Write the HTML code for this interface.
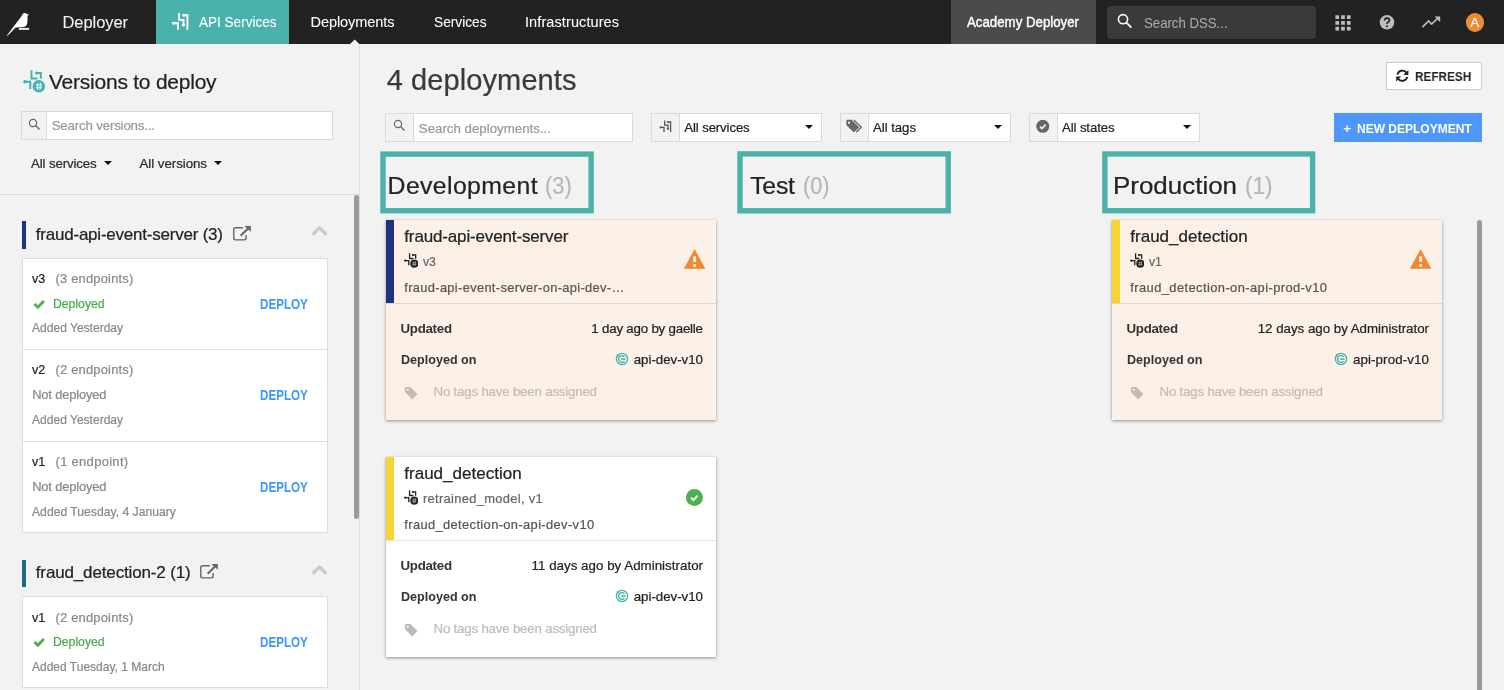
<!DOCTYPE html>
<html>
<head>
<meta charset="utf-8">
<title>Deployer</title>
<style>
*{box-sizing:border-box;margin:0;padding:0}
html,body{width:1504px;height:690px;overflow:hidden;background:#f2f2f2;font-family:"Liberation Sans",sans-serif;color:#222}
#wrap{position:absolute;left:0;top:0;width:1504px;height:690px;will-change:transform}
.a{position:absolute}
.t{position:absolute;white-space:nowrap;line-height:1;-webkit-text-stroke:0.22px}
#nav{position:absolute;left:0;top:0;width:1504px;height:44px;background:#222}
#tabapi{position:absolute;left:156px;top:0;width:133px;height:44px;background:#4ab2ab}
#inst{position:absolute;left:951px;top:0;width:145px;height:44px;background:#4b4b4b}
#gsearch{position:absolute;left:1107px;top:6px;width:209px;height:33px;background:#3a3a3a;border-radius:4px}
.inp{position:absolute;background:#fff;border:1px solid #dadada}
.inp .ic{position:absolute;left:0;top:0;bottom:0;background:#f2f2f2;border-right:1px solid #dadada}
.vbox{position:absolute;left:22px;width:306px;background:#fff;border:1px solid #dddddd}
.vsep{position:absolute;left:22px;width:306px;height:1px;background:#dddddd}
.card{position:absolute;width:330px;height:200px;box-shadow:0 1px 3px rgba(0,0,0,.42)}
.card .bar{position:absolute;left:0;top:0;width:8px;height:83px}
.card .dv{position:absolute;left:0;top:83px;width:330px;height:1px}
.hl{position:absolute;border:5px solid #4ab2ab}
.caret{position:absolute;width:0;height:0;border-left:4.5px solid transparent;border-right:4.5px solid transparent;border-top:4.7px solid #111}
</style>
</head>
<body>
<div id="wrap">

<div id="nav">
  <div id="tabapi"></div>
  <div id="inst"></div>
  <div id="gsearch"></div>

  <svg class="a" style="left:0;top:0" width="60" height="44" viewBox="0 0 60 44"><path d="M6.9 35.5 L21.8 15.8 Q22.3 12.9 24.9 12.9 Q26.6 12.9 27.4 14.4 L29.1 14 L27.5 16.2 Q27.7 20 27.3 23 Q26.3 27.3 22 27.3 L15.6 27.6 L7.6 35.7 Z" fill="#fff"/><rect x="18.9" y="27.9" width="10.2" height="2" fill="#e8e8e8"/></svg>
  <svg class="a" style="left:168px;top:10px" width="24" height="24" viewBox="168 10 24 24"><g fill="none" stroke="#fff" stroke-width="1.9"><path d="M173.4 23.2 H178 V29.8"/><path d="M179.1 13 V19.9 H183.5 V25"/><path d="M183.7 15.2 H187.4 V29.8"/></g><circle cx="173.5" cy="23.2" r="1.5" fill="#fff"/><circle cx="183.5" cy="25" r="1.6" fill="#fff"/><circle cx="183.7" cy="15.2" r="1.5" fill="#fff"/></svg>
  <svg class="a" style="left:349px;top:39px" width="12" height="5" viewBox="349 39 12 5"><path d="M350.1 44 L354.7 39.6 L359.3 44 Z" fill="#f2f2f2"/></svg>
  <svg class="a" style="left:1114px;top:10px" width="22" height="22" viewBox="1114 10 22 22"><circle cx="1123" cy="19.2" r="4.6" fill="none" stroke="#fff" stroke-width="1.6"/><path d="M1126.4 22.6 L1131.4 27.6" stroke="#fff" stroke-width="1.8"/></svg>
  <svg class="a" style="left:1335px;top:14.6px" width="16" height="16" viewBox="0 0 16 16"><g fill="#bdbdbd"><rect x="0.40" y="0.30" width="3.7" height="3.7"/><rect x="6.15" y="0.30" width="3.7" height="3.7"/><rect x="11.90" y="0.30" width="3.7" height="3.7"/><rect x="0.40" y="6.05" width="3.7" height="3.7"/><rect x="6.15" y="6.05" width="3.7" height="3.7"/><rect x="11.90" y="6.05" width="3.7" height="3.7"/><rect x="0.40" y="11.80" width="3.7" height="3.7"/><rect x="6.15" y="11.80" width="3.7" height="3.7"/><rect x="11.90" y="11.80" width="3.7" height="3.7"/></g></svg>
  <svg class="a" style="left:1379px;top:14px" width="16" height="16" viewBox="0 0 16 16"><circle cx="8" cy="8.3" r="7.3" fill="#bdbdbd"/><path d="M5.6 6.6 Q5.6 4.2 8 4.2 Q10.4 4.2 10.4 6.3 Q10.4 7.6 9 8.3 Q8 8.8 8 10" fill="none" stroke="#222" stroke-width="1.7"/><circle cx="8" cy="12.2" r="1.05" fill="#222"/></svg>
  <svg class="a" style="left:1420px;top:14px" width="22" height="16" viewBox="1420 14 22 16"><path d="M1422.4 27.2 L1428.6 21 L1431.6 24 L1438.6 17.4" fill="none" stroke="#bdbdbd" stroke-width="1.7"/><path d="M1434.6 16.6 H1440.2 V22.2 Z" fill="#bdbdbd"/></svg>
  <div class="a" style="left:1465.7px;top:13.2px;width:18.6px;height:18.6px;border-radius:50%;background:#ef8b33"></div>
  <div class="t" style="left:1470.2px;top:16px;font-size:13.5px;color:#fff">A</div>
  <div class="t" style="top:14px;font-size:16.5px;color:#f2f2f2;left:62.50px;letter-spacing:-0.076px;-webkit-text-stroke:0.08px;">Deployer</div>
  <div class="t" style="top:15px;font-size:14.5px;color:#fff;left:198.50px;transform:scaleX(0.9337);transform-origin:left center;-webkit-text-stroke:0.08px;">API Services</div>
  <div class="t" style="top:15px;font-size:14.5px;color:#fff;left:310.50px;letter-spacing:-0.062px;-webkit-text-stroke:0.08px;">Deployments</div>
  <div class="t" style="top:15px;font-size:14.5px;color:#fff;left:433.60px;transform:scaleX(0.9460);transform-origin:left center;-webkit-text-stroke:0.08px;">Services</div>
  <div class="t" style="top:15px;font-size:14.5px;color:#fff;left:525.00px;letter-spacing:0.095px;-webkit-text-stroke:0.08px;">Infrastructures</div>
  <div class="t" style="top:15px;font-size:14px;color:#fff;left:967.00px;transform:scaleX(0.9469);transform-origin:left center;-webkit-text-stroke:0.4px;">Academy Deployer</div>
  <div class="t" style="top:16px;font-size:14.5px;color:#a8a8a8;left:1144.00px;transform:scaleX(0.9100);transform-origin:left center;-webkit-text-stroke:0.08px;">Search DSS...</div>
</div>


<div class="a" style="left:359px;top:44px;width:1px;height:646px;background:#dedede"></div>
<svg class="a" style="left:22.5px;top:70px" width="22.0" height="23.0" viewBox="0 0 22 23"><g fill="none" stroke="#3fb3ac" stroke-width="2"><path d="M1.8 11.8 H7.3 V18.9"/><path d="M8.5 0.3 V8.4 H14.4"/><path d="M13.6 3 H17.8 V8.7"/></g><circle cx="1.9" cy="11.8" r="1.7" fill="#3fb3ac"/><circle cx="13.6" cy="3" r="1.6" fill="#3fb3ac"/><circle cx="15.8" cy="16.3" r="6.2" fill="#3fb3ac"/><path d="M15 12.7 L14.3 19.9 M17.6 12.7 L16.9 19.9 M12.8 15 H19.1 M12.6 17.7 H18.9" stroke="#fff" stroke-width="1.0" opacity="1.0"/></svg>
<div class="t" style="top:71px;font-size:21px;color:#222;left:49.00px;letter-spacing:-0.236px;">Versions to deploy</div>
<div class="inp" style="left:21px;top:111px;width:312px;height:29px"><div class="ic" style="width:25px"></div></div>
<svg class="a" style="left:25px;top:115.4px" width="18" height="18" viewBox="-8 -8 18 18"><circle cx="0" cy="0" r="3.6" fill="none" stroke="#666" stroke-width="1.2"/><path d="M2.59 2.59 L6.49 6.49" stroke="#666" stroke-width="1.4"/></svg>
<div class="t" style="top:119px;font-size:13.3px;color:#999;left:51.70px;letter-spacing:-0.184px;">Search versions...</div>
<div class="t" style="top:157px;font-size:13.3px;color:#2b2b2b;left:31.00px;letter-spacing:-0.140px;">All services</div>
<div class="caret" style="left:103.9px;top:160.9px"></div>
<div class="t" style="top:157px;font-size:13.3px;color:#2b2b2b;left:139.50px;letter-spacing:-0.044px;">All versions</div>
<div class="caret" style="left:214px;top:160.9px"></div>
<div class="a" style="left:0;top:194px;width:359px;height:1px;background:#dcdcdc"></div>
<div class="a" style="left:354px;top:195px;width:5px;height:324px;background:#9b9b9b;border-radius:2.5px"></div>

<div class="a" style="left:22px;top:221px;width:4px;height:28px;background:#1e3282"></div>
<div class="t" style="top:226px;font-size:17px;color:#222;left:35.80px;letter-spacing:-0.221px;">fraud-api-event-server (3)</div>
<svg class="a" style="left:232px;top:225px" width="20" height="17" viewBox="232 225 20 17"><path d="M242.9 227.8 H235.6 Q233.75 227.8 233.75 229.6 V238.1 Q233.75 239.9 235.6 239.9 H244.3 Q246.15 239.9 246.15 238.1 V235" fill="none" stroke="#666" stroke-width="1.4"/><path d="M240.7 235.7 L248 228.4" stroke="#666" stroke-width="2.1"/><path d="M244.4 226.1 H250.8 V231.8 Z" fill="#666"/></svg>
<svg class="a" style="left:311px;top:224.5px" width="17" height="11" viewBox="0 0 17 11"><path d="M2.7 8.5 L8.5 2.9 L14.3 8.5" fill="none" stroke="#cbcbcb" stroke-width="3.5" stroke-linecap="round" stroke-linejoin="round"/></svg>
<div class="vbox" style="top:258px;height:275px"></div>
<div class="vsep" style="top:349px"></div>
<div class="vsep" style="top:441px"></div>
<div class="t" style="top:273px;font-size:12.9px;color:#222;left:32.00px;transform:scaleX(0.9696);transform-origin:left center;">v3</div><div class="t" style="top:273px;font-size:12.9px;color:#888;left:55.50px;letter-spacing:0.213px;">(3 endpoints)</div><svg class="a" style="left:32.5px;top:297.8px" width="13" height="12" viewBox="0 0 13 12"><path d="M1.5 6 L4.9 9.2 L10.9 3" fill="none" stroke="#4caf50" stroke-width="2.8"/></svg><div class="t" style="top:298px;font-size:12.9px;color:#47ab4b;left:52.80px;transform:scaleX(0.9474);transform-origin:left center;">Deployed</div><div class="t" style="top:297px;font-size:14px;color:#3d98fb;left:260.00px;transform:scaleX(0.8304);transform-origin:left center;font-weight:bold;-webkit-text-stroke:0;">DEPLOY</div><div class="t" style="top:322px;font-size:12.9px;color:#888;left:31.90px;transform:scaleX(0.9344);transform-origin:left center;">Added Yesterday</div>
<div class="t" style="top:364px;font-size:12.9px;color:#222;left:32.00px;transform:scaleX(0.9696);transform-origin:left center;">v2</div><div class="t" style="top:364px;font-size:12.9px;color:#888;left:55.50px;letter-spacing:0.213px;">(2 endpoints)</div><div class="t" style="top:389px;font-size:12.9px;color:#888;left:32.20px;letter-spacing:-0.160px;">Not deployed</div><div class="t" style="top:388px;font-size:14px;color:#3d98fb;left:260.00px;transform:scaleX(0.8304);transform-origin:left center;font-weight:bold;-webkit-text-stroke:0;">DEPLOY</div><div class="t" style="top:414px;font-size:12.9px;color:#888;left:31.90px;transform:scaleX(0.9344);transform-origin:left center;">Added Yesterday</div>
<div class="t" style="top:456px;font-size:12.9px;color:#222;left:32.00px;transform:scaleX(0.9696);transform-origin:left center;">v1</div><div class="t" style="top:456px;font-size:12.9px;color:#888;left:55.50px;letter-spacing:0.346px;">(1 endpoint)</div><div class="t" style="top:481px;font-size:12.9px;color:#888;left:32.20px;letter-spacing:-0.160px;">Not deployed</div><div class="t" style="top:480px;font-size:14px;color:#3d98fb;left:260.00px;transform:scaleX(0.8304);transform-origin:left center;font-weight:bold;-webkit-text-stroke:0;">DEPLOY</div><div class="t" style="top:506px;font-size:12.9px;color:#888;left:31.90px;transform:scaleX(0.9441);transform-origin:left center;">Added Tuesday, 4 January</div>

<div class="a" style="left:22px;top:560px;width:4px;height:27px;background:#1f6a83"></div>
<div class="t" style="top:564px;font-size:17px;color:#222;left:35.80px;letter-spacing:-0.146px;">fraud_detection-2 (1)</div>
<svg class="a" style="left:198.8px;top:563.3px" width="20" height="17" viewBox="232 225 20 17"><path d="M242.9 227.8 H235.6 Q233.75 227.8 233.75 229.6 V238.1 Q233.75 239.9 235.6 239.9 H244.3 Q246.15 239.9 246.15 238.1 V235" fill="none" stroke="#666" stroke-width="1.4"/><path d="M240.7 235.7 L248 228.4" stroke="#666" stroke-width="2.1"/><path d="M244.4 226.1 H250.8 V231.8 Z" fill="#666"/></svg>
<svg class="a" style="left:311px;top:563.5px" width="17" height="11" viewBox="0 0 17 11"><path d="M2.7 8.5 L8.5 2.9 L14.3 8.5" fill="none" stroke="#cbcbcb" stroke-width="3.5" stroke-linecap="round" stroke-linejoin="round"/></svg>
<div class="vbox" style="top:596px;height:92px"></div>
<div class="t" style="top:612px;font-size:12.9px;color:#222;left:32.00px;transform:scaleX(0.9696);transform-origin:left center;">v1</div><div class="t" style="top:612px;font-size:12.9px;color:#888;left:55.50px;letter-spacing:0.213px;">(2 endpoints)</div><svg class="a" style="left:32.5px;top:635.8px" width="13" height="12" viewBox="0 0 13 12"><path d="M1.5 6 L4.9 9.2 L10.9 3" fill="none" stroke="#4caf50" stroke-width="2.8"/></svg><div class="t" style="top:636px;font-size:12.9px;color:#47ab4b;left:52.80px;transform:scaleX(0.9474);transform-origin:left center;">Deployed</div><div class="t" style="top:635px;font-size:14px;color:#3d98fb;left:260.00px;transform:scaleX(0.8304);transform-origin:left center;font-weight:bold;-webkit-text-stroke:0;">DEPLOY</div><div class="t" style="top:661px;font-size:12.9px;color:#888;left:31.90px;transform:scaleX(0.9313);transform-origin:left center;">Added Tuesday, 1 March</div>


<div class="t" style="top:66px;font-size:29px;color:#3a3a3a;left:386.70px;letter-spacing:0.099px;">4 deployments</div>
<div class="a" style="left:1386px;top:62px;width:96px;height:28px;background:#fff;border:1px solid #ccc"></div>
<svg class="a" style="left:1395px;top:68px" width="16" height="16" viewBox="1395 68 16 16"><g fill="none" stroke="#222" stroke-width="1.9"><path d="M1397.4 74.6 A5.1 5.1 0 0 1 1406.4 72.6"/><path d="M1407.2 76.9 A5.1 5.1 0 0 1 1398.2 78.9"/></g><path d="M1408.4 70 V75 H1403.4 Z" fill="#222"/><path d="M1396.2 81.5 V76.5 H1401.2 Z" fill="#222"/></svg>
<div class="t" style="top:70px;font-size:13.3px;color:#222;left:1415.20px;transform:scaleX(0.8845);transform-origin:left center;font-weight:bold;-webkit-text-stroke:0;">REFRESH</div>
<div class="inp" style="left:385px;top:113px;width:248px;height:29px"><div class="ic" style="width:28px"></div></div>
<svg class="a" style="left:390.1px;top:116.4px" width="18" height="18" viewBox="-8 -8 18 18"><circle cx="0" cy="0" r="3.6" fill="none" stroke="#666" stroke-width="1.2"/><path d="M2.59 2.59 L6.49 6.49" stroke="#666" stroke-width="1.4"/></svg>
<div class="t" style="top:122px;font-size:13.3px;color:#999;left:418.80px;letter-spacing:-0.005px;">Search deployments...</div>
<div class="inp" style="left:651px;top:113px;width:171px;height:29px"><div class="ic" style="width:28px"></div></div>
<svg class="a" style="left:658px;top:119px" width="15" height="15" viewBox="658 119 15 15"><g fill="none" stroke="#555" stroke-width="1.3"><path d="M660.6 127.4 H664 V132"/><path d="M664.7 120.4 V125.2 H667.9 V128.6"/><path d="M668 122 H670.6 V132"/></g><circle cx="660.7" cy="127.4" r="1.1" fill="#555"/><circle cx="667.9" cy="128.8" r="1.15" fill="#555"/><circle cx="668" cy="122" r="1.05" fill="#555"/></svg>
<div class="t" style="top:121px;font-size:13.2px;color:#222;left:684.30px;letter-spacing:-0.117px;">All services</div>
<div class="caret" style="left:804.9px;top:124.9px"></div>
<div class="inp" style="left:840px;top:113px;width:171px;height:29px"><div class="ic" style="width:27.5px"></div></div>
<svg class="a" style="left:845px;top:118px" width="19" height="16" viewBox="845 118 19 16"><path d="M846.3 121 Q846.3 119.8 847.5 119.8 H851.5 L858.8 127.1 Q859.1 127.4 858.8 127.7 L854.2 132.1 Q853.8 132.4 853.4 132.1 L846.3 125 Z" fill="#666"/><rect x="848" y="121.7" width="2" height="2" rx="0.4" fill="#f2f2f2"/><path d="M853.8 119.9 L861.2 127.3 L856.3 132.2" fill="none" stroke="#666" stroke-width="1.4"/></svg>
<div class="t" style="top:121px;font-size:13.2px;color:#222;left:873.00px;letter-spacing:-0.035px;">All tags</div>
<div class="caret" style="left:993.9px;top:124.9px"></div>
<div class="inp" style="left:1029px;top:113px;width:171px;height:29px"><div class="ic" style="width:27.5px"></div></div>
<svg class="a" style="left:1035px;top:119px" width="16" height="16" viewBox="1035 119 16 16"><circle cx="1042.8" cy="126.3" r="6.5" fill="#666"/><path d="M1040 126.6 L1041.9 128.5 L1045.6 124.6" fill="none" stroke="#f2f2f2" stroke-width="1.7"/></svg>
<div class="t" style="top:121px;font-size:13.2px;color:#222;left:1062.00px;letter-spacing:-0.111px;">All states</div>
<div class="caret" style="left:1182.9px;top:124.9px"></div>
<div class="a" style="left:1334px;top:113px;width:148px;height:29px;background:#4f98fb"></div>
<div class="t" style="top:122px;font-size:13.4px;color:#fff;left:1343.30px;font-weight:bold;-webkit-text-stroke:0;">+</div><div class="t" style="top:122px;font-size:13.4px;color:#fff;left:1357.00px;transform:scaleX(0.8964);transform-origin:left center;font-weight:bold;-webkit-text-stroke:0;">NEW DEPLOYMENT</div>

<svg class="a" style="left:379px;top:150px" width="217" height="66" viewBox="379 150 217 66"><rect x="383.00" y="154.10" width="208.10" height="56.60" fill="none" stroke="#4ab2ab" stroke-width="5.4"/></svg>
<svg class="a" style="left:736px;top:150px" width="217" height="66" viewBox="736 150 217 66"><rect x="740.00" y="153.90" width="208.20" height="56.90" fill="none" stroke="#4ab2ab" stroke-width="5.4"/></svg>
<svg class="a" style="left:1101px;top:150px" width="217" height="66" viewBox="1101 150 217 66"><rect x="1104.90" y="154.00" width="207.70" height="56.70" fill="none" stroke="#4ab2ab" stroke-width="5.4"/></svg>
<div class="t" style="top:174px;font-size:24.8px;color:#222;left:387.60px;letter-spacing:0.389px;">Development</div><div class="t" style="top:174px;font-size:24.8px;color:#b6b6b6;left:545.00px;transform:scaleX(0.8810);transform-origin:left center;">(3)</div>
<div class="t" style="top:174px;font-size:24.8px;color:#222;left:750.20px;letter-spacing:-0.226px;">Test</div><div class="t" style="top:174px;font-size:24.8px;color:#b6b6b6;left:802.50px;transform:scaleX(0.8744);transform-origin:left center;">(0)</div>
<div class="t" style="top:174px;font-size:24.8px;color:#222;left:1113.00px;transform:scaleX(1.0460);transform-origin:left center;">Production</div><div class="t" style="top:174px;font-size:24.8px;color:#b6b6b6;left:1244.50px;transform:scaleX(0.9074);transform-origin:left center;">(1)</div>

<div class="card" style="left:386px;top:220px;background:#fdf0e7"><div class="bar" style="background:#1e3282"></div><div class="dv" style="background:#dcd5cf"></div><div class="t" style="top:8px;font-size:17px;color:#222;left:18.30px;letter-spacing:-0.149px;">fraud-api-event-server</div><svg class="a" style="left:17.9px;top:33.3px" width="14.4" height="15.0" viewBox="0 0 22 23"><g fill="none" stroke="#222" stroke-width="2"><path d="M1.8 11.8 H7.3 V18.9"/><path d="M8.5 0.3 V8.4 H14.4"/><path d="M13.6 3 H17.8 V8.7"/></g><circle cx="1.9" cy="11.8" r="1.7" fill="#222"/><circle cx="13.6" cy="3" r="1.6" fill="#222"/><circle cx="15.8" cy="16.3" r="6.2" fill="#222"/><path d="M15 12.7 L14.3 19.9 M17.6 12.7 L16.9 19.9 M12.8 15 H19.1 M12.6 17.7 H18.9" stroke="#fdf0e7" stroke-width="0.9" opacity="0.75"/></svg><div class="t" style="top:36px;font-size:12.9px;color:#666;left:37.00px;transform:scaleX(0.9475);transform-origin:left center;">v3</div><div class="t" style="top:62px;font-size:12.9px;color:#555;left:18.30px;letter-spacing:0.318px;">fraud-api-event-server-on-api-dev-…</div><svg class="a" style="left:297px;top:28px" width="24" height="22" viewBox="683 248 24 22"><path d="M694.6 250.4 L704.4 268.2 H684.8 Z" fill="#ef8a33" stroke="#ef8a33" stroke-width="1.3" stroke-linejoin="round"/><rect x="693.2" y="256.4" width="2.9" height="5.5" fill="#fdf0e7"/><rect x="693.2" y="264.1" width="2.9" height="2.7" fill="#fdf0e7"/></svg><div class="t" style="top:102px;font-size:13.3px;color:#333;left:14.50px;letter-spacing:-0.281px;font-weight:bold;-webkit-text-stroke:0;">Updated</div><div class="t" style="top:102px;font-size:13.3px;color:#222;right:13.20px;letter-spacing:-0.202px;">1 day ago by gaelle</div><div class="t" style="top:133px;font-size:13.3px;color:#333;left:14.50px;transform:scaleX(0.9450);transform-origin:left center;font-weight:bold;-webkit-text-stroke:0;">Deployed on</div><div class="t" style="top:133px;font-size:13.3px;color:#222;right:13.02px;letter-spacing:-0.018px;">api-dev-v10</div><svg class="a" style="left:228.6px;top:131.8px" width="14" height="14" viewBox="-7 -7 14 14"><g fill="none" stroke="#3fb3ac" stroke-width="1.3"><circle cx="0" cy="0" r="5.6"/><path d="M2.5 -2.3 A3.4 3.4 0 1 0 2.5 2.3"/><path d="M-0.8 0.1 H3.6" stroke-width="1.5"/></g><circle cx="-4.2" cy="-3.7" r="1.15" fill="#3fb3ac"/></svg><svg class="a" style="left:18px;top:165.5px" width="15" height="15" viewBox="404 385.5 15 15"><path d="M404.9 387.8 Q404.9 386.5 406.2 386.5 H410.3 L417 393.1 Q417.5 393.6 417 394.1 L412.9 398.5 Q412.3 399 411.8 398.5 L404.9 391.6 Z" fill="#c4bbb4"/><rect x="406.8" y="388.3" width="1.9" height="1.8" rx="0.4" fill="#fdf0e7"/></svg><div class="t" style="top:165px;font-size:13.3px;color:#c4bbb4;left:47.50px;letter-spacing:-0.202px;">No tags have been assigned</div></div>
<div class="card" style="left:386px;top:457px;background:#fff"><div class="bar" style="background:#f6d433"></div><div class="dv" style="background:#e4e4e4"></div><div class="t" style="top:8px;font-size:17px;color:#222;left:18.30px;letter-spacing:0.007px;">fraud_detection</div><svg class="a" style="left:17.9px;top:33.3px" width="14.4" height="15.0" viewBox="0 0 22 23"><g fill="none" stroke="#222" stroke-width="2"><path d="M1.8 11.8 H7.3 V18.9"/><path d="M8.5 0.3 V8.4 H14.4"/><path d="M13.6 3 H17.8 V8.7"/></g><circle cx="1.9" cy="11.8" r="1.7" fill="#222"/><circle cx="13.6" cy="3" r="1.6" fill="#222"/><circle cx="15.8" cy="16.3" r="6.2" fill="#222"/><path d="M15 12.7 L14.3 19.9 M17.6 12.7 L16.9 19.9 M12.8 15 H19.1 M12.6 17.7 H18.9" stroke="#fff" stroke-width="0.9" opacity="0.75"/></svg><div class="t" style="top:36px;font-size:12.9px;color:#666;left:37.00px;letter-spacing:0.315px;">retrained_model, v1</div><div class="t" style="top:62px;font-size:12.9px;color:#555;left:18.30px;letter-spacing:0.367px;">fraud_detection-on-api-dev-v10</div><svg class="a" style="left:299px;top:31px" width="19" height="19" viewBox="0 0 19 19"><circle cx="9.4" cy="9.5" r="8.5" fill="#4caf50"/><path d="M6 9.8 L8.4 12.1 L12.6 7.6" fill="none" stroke="#fff" stroke-width="2"/></svg><div class="t" style="top:102px;font-size:13.3px;color:#333;left:14.50px;letter-spacing:-0.281px;font-weight:bold;-webkit-text-stroke:0;">Updated</div><div class="t" style="top:102px;font-size:13.3px;color:#222;right:12.96px;letter-spacing:0.036px;">11 days ago by Administrator</div><div class="t" style="top:133px;font-size:13.3px;color:#333;left:14.50px;transform:scaleX(0.9450);transform-origin:left center;font-weight:bold;-webkit-text-stroke:0;">Deployed on</div><div class="t" style="top:133px;font-size:13.3px;color:#222;right:13.02px;letter-spacing:-0.018px;">api-dev-v10</div><svg class="a" style="left:228.6px;top:131.8px" width="14" height="14" viewBox="-7 -7 14 14"><g fill="none" stroke="#3fb3ac" stroke-width="1.3"><circle cx="0" cy="0" r="5.6"/><path d="M2.5 -2.3 A3.4 3.4 0 1 0 2.5 2.3"/><path d="M-0.8 0.1 H3.6" stroke-width="1.5"/></g><circle cx="-4.2" cy="-3.7" r="1.15" fill="#3fb3ac"/></svg><svg class="a" style="left:18px;top:165.5px" width="15" height="15" viewBox="404 385.5 15 15"><path d="M404.9 387.8 Q404.9 386.5 406.2 386.5 H410.3 L417 393.1 Q417.5 393.6 417 394.1 L412.9 398.5 Q412.3 399 411.8 398.5 L404.9 391.6 Z" fill="#bbbbbb"/><rect x="406.8" y="388.3" width="1.9" height="1.8" rx="0.4" fill="#fff"/></svg><div class="t" style="top:165px;font-size:13.3px;color:#bbbbbb;left:47.50px;letter-spacing:-0.202px;">No tags have been assigned</div></div>
<div class="card" style="left:1112px;top:220px;background:#fdf0e7"><div class="bar" style="background:#f6d433"></div><div class="dv" style="background:#dcd5cf"></div><div class="t" style="top:8px;font-size:17px;color:#222;left:18.30px;letter-spacing:0.007px;">fraud_detection</div><svg class="a" style="left:17.9px;top:33.3px" width="14.4" height="15.0" viewBox="0 0 22 23"><g fill="none" stroke="#222" stroke-width="2"><path d="M1.8 11.8 H7.3 V18.9"/><path d="M8.5 0.3 V8.4 H14.4"/><path d="M13.6 3 H17.8 V8.7"/></g><circle cx="1.9" cy="11.8" r="1.7" fill="#222"/><circle cx="13.6" cy="3" r="1.6" fill="#222"/><circle cx="15.8" cy="16.3" r="6.2" fill="#222"/><path d="M15 12.7 L14.3 19.9 M17.6 12.7 L16.9 19.9 M12.8 15 H19.1 M12.6 17.7 H18.9" stroke="#fdf0e7" stroke-width="0.9" opacity="0.75"/></svg><div class="t" style="top:36px;font-size:12.9px;color:#666;left:37.00px;transform:scaleX(0.9475);transform-origin:left center;">v1</div><div class="t" style="top:62px;font-size:12.9px;color:#555;left:18.30px;letter-spacing:0.415px;">fraud_detection-on-api-prod-v10</div><svg class="a" style="left:297px;top:28px" width="24" height="22" viewBox="683 248 24 22"><path d="M694.6 250.4 L704.4 268.2 H684.8 Z" fill="#ef8a33" stroke="#ef8a33" stroke-width="1.3" stroke-linejoin="round"/><rect x="693.2" y="256.4" width="2.9" height="5.5" fill="#fdf0e7"/><rect x="693.2" y="264.1" width="2.9" height="2.7" fill="#fdf0e7"/></svg><div class="t" style="top:102px;font-size:13.3px;color:#333;left:14.50px;letter-spacing:-0.281px;font-weight:bold;-webkit-text-stroke:0;">Updated</div><div class="t" style="top:102px;font-size:13.3px;color:#222;right:13.01px;letter-spacing:-0.008px;">12 days ago by Administrator</div><div class="t" style="top:133px;font-size:13.3px;color:#333;left:14.50px;transform:scaleX(0.9450);transform-origin:left center;font-weight:bold;-webkit-text-stroke:0;">Deployed on</div><div class="t" style="top:133px;font-size:13.3px;color:#222;right:12.87px;letter-spacing:0.132px;">api-prod-v10</div><svg class="a" style="left:221.8px;top:131.8px" width="14" height="14" viewBox="-7 -7 14 14"><g fill="none" stroke="#3fb3ac" stroke-width="1.3"><circle cx="0" cy="0" r="5.6"/><path d="M2.5 -2.3 A3.4 3.4 0 1 0 2.5 2.3"/><path d="M-0.8 0.1 H3.6" stroke-width="1.5"/></g><circle cx="-4.2" cy="-3.7" r="1.15" fill="#3fb3ac"/></svg><svg class="a" style="left:18px;top:165.5px" width="15" height="15" viewBox="404 385.5 15 15"><path d="M404.9 387.8 Q404.9 386.5 406.2 386.5 H410.3 L417 393.1 Q417.5 393.6 417 394.1 L412.9 398.5 Q412.3 399 411.8 398.5 L404.9 391.6 Z" fill="#c4bbb4"/><rect x="406.8" y="388.3" width="1.9" height="1.8" rx="0.4" fill="#fdf0e7"/></svg><div class="t" style="top:165px;font-size:13.3px;color:#c4bbb4;left:47.50px;letter-spacing:-0.202px;">No tags have been assigned</div></div>
<div class="a" style="left:1477px;top:220px;width:5px;height:480px;background:#999;border-radius:2.5px"></div>

</div>
</body>
</html>
